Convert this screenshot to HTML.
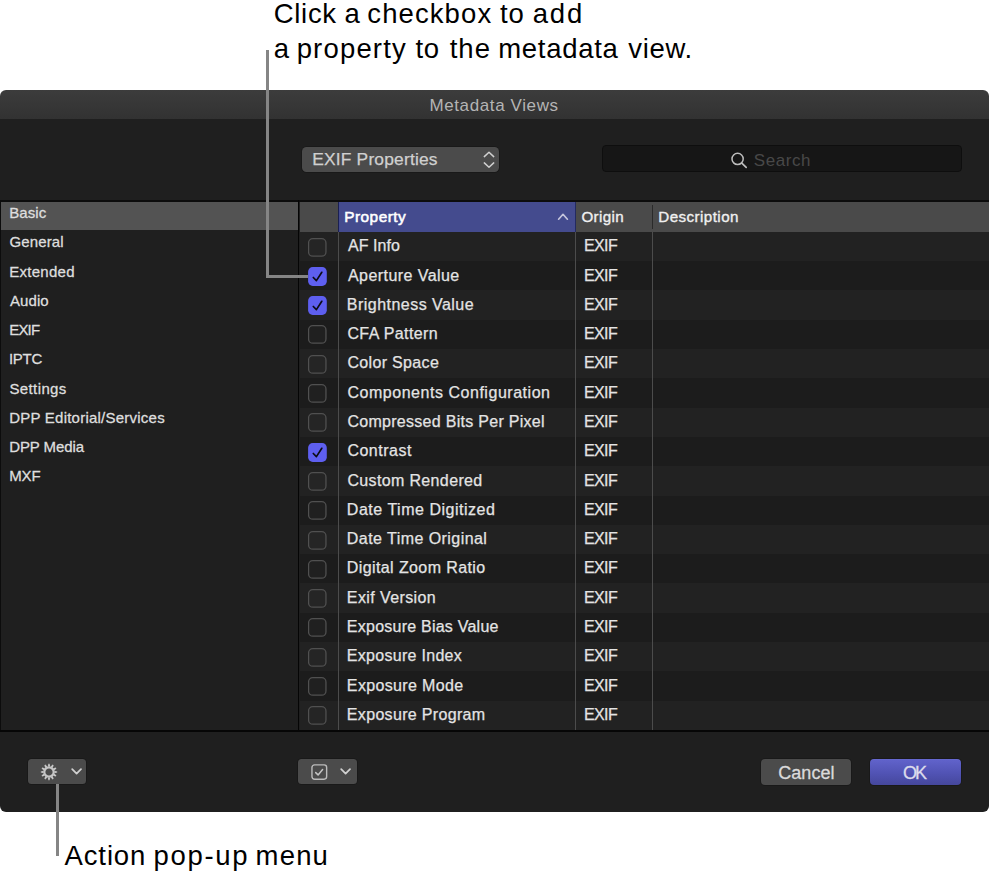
<!DOCTYPE html>
<html><head><meta charset="utf-8"><title>Metadata Views</title>
<style>
html,body{margin:0;padding:0;background:#fff;}
body{width:990px;height:884px;position:relative;overflow:hidden;font-family:"Liberation Sans",sans-serif;}
.abs{position:absolute;}
.t{position:absolute;white-space:nowrap;line-height:1em;}
.win{position:absolute;left:0;top:90px;width:988.7px;height:722px;background:linear-gradient(#3c3c3c 0,#323232 28.9px,#1f1f1f 28.9px);border-radius:6px;overflow:hidden;}
.btn{position:absolute;height:25.2px;box-shadow:0 0 0 0.8px #181818;border-radius:3.5px;background:#4b4b4b;}
.ln{position:absolute;background:#858585;}
</style></head><body>
<div class="win">
<div class="btn" style="left:302px;top:56.5px;width:197.3px;height:25.4px;border-radius:4.5px;">
<svg class="abs" style="left:179.5px;top:4.2px" width="14" height="18" viewBox="0 0 14 18"><path d="M2.3 5.6 L7 1.3 L11.7 5.6 M2.3 11.9 L7 16.2 L11.7 11.9" fill="none" stroke="#d0d0d0" stroke-width="1.5" stroke-linecap="round" stroke-linejoin="round"/></svg></div>
<div class="abs" style="left:602px;top:55.2px;width:360px;height:27.3px;border:1px solid #0e0e0e;border-radius:4px;background:#161616;box-sizing:border-box;"></div>
<svg class="abs" style="left:729px;top:61px" width="20" height="20" viewBox="0 0 20 20"><circle cx="8.6" cy="7.9" r="5.6" fill="none" stroke="#bdbdbd" stroke-width="1.5"/><path d="M12.8 12.1 L17.2 16.4" stroke="#bdbdbd" stroke-width="1.7" stroke-linecap="round"/></svg>
<div class="abs" style="left:0;top:110.1px;width:989px;height:1.8px;background:#0c0c0c;"></div>
<div class="abs" style="left:0;top:111.9px;width:298px;height:27.9px;background:#535353;"></div>
<div class="abs" style="left:0;top:110.1px;width:1.1px;height:531px;background:#0c0c0c;"></div>
<div class="abs" style="left:297.9px;top:110.1px;width:1.6px;height:531px;background:#050505;"></div>
<div class="abs" style="left:299.5px;top:111.9px;width:690px;height:527.9px;background:#1c1c1c;"></div>
<div class="abs" style="left:299.5px;top:111.9px;width:690px;height:30px;background:#4a4a4a;"></div>
<div class="abs" style="left:338px;top:111.9px;width:237.6px;height:30px;background:#444b8e;"></div>
<div class="abs" style="left:338px;top:111.9px;width:1.1px;height:30px;background:#1a1f52;"></div>
<div class="abs" style="left:574.5px;top:111.9px;width:1.1px;height:30px;background:#232a60;"></div>
<div class="abs" style="left:651.6px;top:114.5px;width:1.2px;height:24px;background:#2a2a2a;"></div>
<svg class="abs" style="left:557px;top:122px" width="12" height="9" viewBox="0 0 12 9"><path d="M1.6 7.2 L6 2.3 L10.4 7.2" fill="none" stroke="#c4c4dc" stroke-width="1.7" stroke-linecap="round" stroke-linejoin="round"/></svg>
<div class="abs" style="left:299.5px;top:141.90px;width:690px;height:29.29px;background:#222222;"></div><div class="abs" style="left:299.5px;top:200.48px;width:690px;height:29.29px;background:#222222;"></div><div class="abs" style="left:299.5px;top:259.06px;width:690px;height:29.29px;background:#222222;"></div><div class="abs" style="left:299.5px;top:317.64px;width:690px;height:29.29px;background:#222222;"></div><div class="abs" style="left:299.5px;top:376.22px;width:690px;height:29.29px;background:#222222;"></div><div class="abs" style="left:299.5px;top:434.80px;width:690px;height:29.29px;background:#222222;"></div><div class="abs" style="left:299.5px;top:493.38px;width:690px;height:29.29px;background:#222222;"></div><div class="abs" style="left:299.5px;top:551.96px;width:690px;height:29.29px;background:#222222;"></div><div class="abs" style="left:299.5px;top:610.54px;width:690px;height:29.29px;background:#222222;"></div>
<div class="abs" style="left:338.2px;top:141.9px;width:1px;height:498px;background:#4c4c4c;"></div>
<div class="abs" style="left:574.9px;top:141.9px;width:1px;height:498px;background:#4c4c4c;"></div>
<div class="abs" style="left:651.7px;top:141.9px;width:1px;height:498px;background:#4c4c4c;"></div>
<div class="abs" style="left:0;top:639.8px;width:989px;height:1.8px;background:#060606;"></div>
</div>
<svg class="abs" style="left:307.6px;top:237.60px" width="19" height="19" viewBox="0 0 19 19"><rect x="0.55" y="0.7" width="17.4" height="17.5" rx="4.3" fill="#252525" stroke="#505050" stroke-width="1.3"/></svg>
<svg class="abs" style="left:307.6px;top:266.89px" width="19" height="19" viewBox="0 0 19 19"><rect x="0.1" y="0.1" width="18.7" height="18.8" rx="4.6" fill="#5e5ff0"/><path d="M5.3 10.5 L8.4 13.6 L13.8 5.3" fill="none" stroke="#0c0c14" stroke-width="1.7" stroke-linecap="round" stroke-linejoin="round"/></svg>
<svg class="abs" style="left:307.6px;top:296.18px" width="19" height="19" viewBox="0 0 19 19"><rect x="0.1" y="0.1" width="18.7" height="18.8" rx="4.6" fill="#5e5ff0"/><path d="M5.3 10.5 L8.4 13.6 L13.8 5.3" fill="none" stroke="#0c0c14" stroke-width="1.7" stroke-linecap="round" stroke-linejoin="round"/></svg>
<svg class="abs" style="left:307.6px;top:325.47px" width="19" height="19" viewBox="0 0 19 19"><rect x="0.55" y="0.7" width="17.4" height="17.5" rx="4.3" fill="#202020" stroke="#505050" stroke-width="1.3"/></svg>
<svg class="abs" style="left:307.6px;top:354.76px" width="19" height="19" viewBox="0 0 19 19"><rect x="0.55" y="0.7" width="17.4" height="17.5" rx="4.3" fill="#252525" stroke="#505050" stroke-width="1.3"/></svg>
<svg class="abs" style="left:307.6px;top:384.05px" width="19" height="19" viewBox="0 0 19 19"><rect x="0.55" y="0.7" width="17.4" height="17.5" rx="4.3" fill="#202020" stroke="#505050" stroke-width="1.3"/></svg>
<svg class="abs" style="left:307.6px;top:413.34px" width="19" height="19" viewBox="0 0 19 19"><rect x="0.55" y="0.7" width="17.4" height="17.5" rx="4.3" fill="#252525" stroke="#505050" stroke-width="1.3"/></svg>
<svg class="abs" style="left:307.6px;top:442.63px" width="19" height="19" viewBox="0 0 19 19"><rect x="0.1" y="0.1" width="18.7" height="18.8" rx="4.6" fill="#5e5ff0"/><path d="M5.3 10.5 L8.4 13.6 L13.8 5.3" fill="none" stroke="#0c0c14" stroke-width="1.7" stroke-linecap="round" stroke-linejoin="round"/></svg>
<svg class="abs" style="left:307.6px;top:471.92px" width="19" height="19" viewBox="0 0 19 19"><rect x="0.55" y="0.7" width="17.4" height="17.5" rx="4.3" fill="#252525" stroke="#505050" stroke-width="1.3"/></svg>
<svg class="abs" style="left:307.6px;top:501.21px" width="19" height="19" viewBox="0 0 19 19"><rect x="0.55" y="0.7" width="17.4" height="17.5" rx="4.3" fill="#202020" stroke="#505050" stroke-width="1.3"/></svg>
<svg class="abs" style="left:307.6px;top:530.50px" width="19" height="19" viewBox="0 0 19 19"><rect x="0.55" y="0.7" width="17.4" height="17.5" rx="4.3" fill="#252525" stroke="#505050" stroke-width="1.3"/></svg>
<svg class="abs" style="left:307.6px;top:559.79px" width="19" height="19" viewBox="0 0 19 19"><rect x="0.55" y="0.7" width="17.4" height="17.5" rx="4.3" fill="#202020" stroke="#505050" stroke-width="1.3"/></svg>
<svg class="abs" style="left:307.6px;top:589.08px" width="19" height="19" viewBox="0 0 19 19"><rect x="0.55" y="0.7" width="17.4" height="17.5" rx="4.3" fill="#252525" stroke="#505050" stroke-width="1.3"/></svg>
<svg class="abs" style="left:307.6px;top:618.37px" width="19" height="19" viewBox="0 0 19 19"><rect x="0.55" y="0.7" width="17.4" height="17.5" rx="4.3" fill="#202020" stroke="#505050" stroke-width="1.3"/></svg>
<svg class="abs" style="left:307.6px;top:647.66px" width="19" height="19" viewBox="0 0 19 19"><rect x="0.55" y="0.7" width="17.4" height="17.5" rx="4.3" fill="#252525" stroke="#505050" stroke-width="1.3"/></svg>
<svg class="abs" style="left:307.6px;top:676.95px" width="19" height="19" viewBox="0 0 19 19"><rect x="0.55" y="0.7" width="17.4" height="17.5" rx="4.3" fill="#202020" stroke="#505050" stroke-width="1.3"/></svg>
<svg class="abs" style="left:307.6px;top:706.24px" width="19" height="19" viewBox="0 0 19 19"><rect x="0.55" y="0.7" width="17.4" height="17.5" rx="4.3" fill="#252525" stroke="#505050" stroke-width="1.3"/></svg>
<div class="btn" style="left:28px;top:758.7px;width:58.4px;">
<svg class="abs" style="left:11.1px;top:3.0px" width="20" height="20" viewBox="-10 -10 20 20"><circle r="4.65" fill="none" stroke="#c6c6c6" stroke-width="2.1"/><g fill="#c6c6c6"><path d="M-1.25 -5.4 L-0.6 -8.2 L0.6 -8.2 L1.25 -5.4 Z" transform="rotate(0)"/><path d="M-1.25 -5.4 L-0.6 -8.2 L0.6 -8.2 L1.25 -5.4 Z" transform="rotate(30)"/><path d="M-1.25 -5.4 L-0.6 -8.2 L0.6 -8.2 L1.25 -5.4 Z" transform="rotate(60)"/><path d="M-1.25 -5.4 L-0.6 -8.2 L0.6 -8.2 L1.25 -5.4 Z" transform="rotate(90)"/><path d="M-1.25 -5.4 L-0.6 -8.2 L0.6 -8.2 L1.25 -5.4 Z" transform="rotate(120)"/><path d="M-1.25 -5.4 L-0.6 -8.2 L0.6 -8.2 L1.25 -5.4 Z" transform="rotate(150)"/><path d="M-1.25 -5.4 L-0.6 -8.2 L0.6 -8.2 L1.25 -5.4 Z" transform="rotate(180)"/><path d="M-1.25 -5.4 L-0.6 -8.2 L0.6 -8.2 L1.25 -5.4 Z" transform="rotate(210)"/><path d="M-1.25 -5.4 L-0.6 -8.2 L0.6 -8.2 L1.25 -5.4 Z" transform="rotate(240)"/><path d="M-1.25 -5.4 L-0.6 -8.2 L0.6 -8.2 L1.25 -5.4 Z" transform="rotate(270)"/><path d="M-1.25 -5.4 L-0.6 -8.2 L0.6 -8.2 L1.25 -5.4 Z" transform="rotate(300)"/><path d="M-1.25 -5.4 L-0.6 -8.2 L0.6 -8.2 L1.25 -5.4 Z" transform="rotate(330)"/></g></svg>
<svg class="abs" style="left:42.6px;top:9.2px" width="12" height="8" viewBox="0 0 12 8"><path d="M1.2 1.2 L5.6 5.7 L10 1.2" fill="none" stroke="#d0d0d0" stroke-width="1.7" stroke-linecap="round" stroke-linejoin="round"/></svg></div>
<div class="btn" style="left:297.8px;top:758.7px;width:59px;">
<svg class="abs" style="left:13px;top:5px" width="17" height="17" viewBox="0 0 17 17"><rect x="0.95" y="0.9" width="14.7" height="14.3" rx="2.6" fill="none" stroke="#bcbcbc" stroke-width="1.4"/><path d="M4.7 8.6 L7.1 10.9 L11.6 5.6" fill="none" stroke="#c4c4c4" stroke-width="1.5" stroke-linecap="round" stroke-linejoin="round"/></svg>
<svg class="abs" style="left:42.6px;top:9.2px" width="12" height="8" viewBox="0 0 12 8"><path d="M1.2 1.2 L5.6 5.7 L10 1.2" fill="none" stroke="#d0d0d0" stroke-width="1.7" stroke-linecap="round" stroke-linejoin="round"/></svg></div>
<div class="btn" style="left:761.2px;top:758.9px;width:90.1px;height:25.8px;border-radius:4px;"></div>
<div class="btn" style="left:869.9px;top:758.9px;width:91.1px;height:25.9px;border-radius:4px;background:linear-gradient(#696bd2 0,#6062ca 5%,#5153b4 55%,#45479c 100%);"></div>
<div class="ln" style="left:266.45px;top:50px;width:2.7px;height:227.6px;"></div>
<div class="ln" style="left:266.45px;top:274.9px;width:41.2px;height:2.7px;"></div>
<div class="ln" style="left:55.95px;top:783.9px;width:2.7px;height:72.1px;"></div>
<div class="t" id="c0" style="left:273.76px;top:0.02px;font-size:27.5px;color:#000;letter-spacing:0.691px;">Click</div>
<div class="t" id="c1" style="left:344.50px;top:0.02px;font-size:27.5px;color:#000;">a</div>
<div class="t" id="c2" style="left:367.29px;top:0.02px;font-size:27.5px;color:#000;letter-spacing:1.099px;">checkbox</div>
<div class="t" id="c3" style="left:500.07px;top:0.02px;font-size:27.5px;color:#000;letter-spacing:0.717px;">to</div>
<div class="t" id="c4" style="left:532.78px;top:0.02px;font-size:27.5px;color:#000;letter-spacing:1.766px;">add</div>
<div class="t" id="c5" style="left:273.87px;top:34.72px;font-size:27.5px;color:#000;">a</div>
<div class="t" id="c6" style="left:296.66px;top:34.72px;font-size:27.5px;color:#000;letter-spacing:1.174px;">property</div>
<div class="t" id="c7" style="left:415.40px;top:34.72px;font-size:27.5px;color:#000;letter-spacing:0.615px;">to</div>
<div class="t" id="c8" style="left:449.65px;top:34.72px;font-size:27.5px;color:#000;letter-spacing:1.034px;">the</div>
<div class="t" id="c9" style="left:498.19px;top:34.72px;font-size:27.5px;color:#000;letter-spacing:0.710px;">metadata</div>
<div class="t" id="c10" style="left:628.17px;top:34.72px;font-size:27.5px;color:#000;letter-spacing:0.740px;">view.</div>
<div class="t" id="c11" style="left:64.50px;top:841.52px;font-size:27.5px;color:#000;letter-spacing:0.881px;">Action</div>
<div class="t" id="c12" style="left:153.41px;top:841.52px;font-size:27.5px;color:#000;letter-spacing:1.723px;">pop-up</div>
<div class="t" id="c13" style="left:255.57px;top:841.52px;font-size:27.5px;color:#000;letter-spacing:1.185px;">menu</div>
<div class="t" id="title" style="left:429.44px;top:96.91px;font-size:17px;color:#b4b4b4;letter-spacing:0.615px;">Metadata Views</div>
<div class="t" id="dd" style="left:312.18px;top:151.07px;font-size:17.4px;color:#d0d0d0;letter-spacing:0.187px;-webkit-text-stroke:0.25px #d0d0d0;">EXIF Properties</div>
<div class="t" id="search" style="left:753.77px;top:152.21px;font-size:17px;color:#484848;letter-spacing:0.560px;">Search</div>
<div class="t" id="s0" style="left:9.19px;top:205.20px;font-size:15px;color:#dedede;letter-spacing:0.109px;-webkit-text-stroke:0.3px #dedede;">Basic</div>
<div class="t" id="s1" style="left:9.58px;top:234.44px;font-size:15px;color:#dedede;letter-spacing:0.118px;-webkit-text-stroke:0.3px #dedede;">General</div>
<div class="t" id="s2" style="left:9.19px;top:263.68px;font-size:15px;color:#dedede;letter-spacing:0.279px;-webkit-text-stroke:0.3px #dedede;">Extended</div>
<div class="t" id="s3" style="left:10.07px;top:292.92px;font-size:15px;color:#dedede;letter-spacing:0.053px;-webkit-text-stroke:0.3px #dedede;">Audio</div>
<div class="t" id="s4" style="left:9.19px;top:322.16px;font-size:15px;color:#dedede;letter-spacing:-0.787px;-webkit-text-stroke:0.3px #dedede;">EXIF</div>
<div class="t" id="s5" style="left:8.89px;top:351.40px;font-size:15px;color:#dedede;letter-spacing:-0.276px;-webkit-text-stroke:0.3px #dedede;">IPTC</div>
<div class="t" id="s6" style="left:9.45px;top:380.64px;font-size:15px;color:#dedede;letter-spacing:0.388px;-webkit-text-stroke:0.3px #dedede;">Settings</div>
<div class="t" id="s7" style="left:9.19px;top:409.88px;font-size:15px;color:#dedede;letter-spacing:0.230px;-webkit-text-stroke:0.3px #dedede;">DPP Editorial/Services</div>
<div class="t" id="s8" style="left:9.19px;top:439.12px;font-size:15px;color:#dedede;letter-spacing:-0.095px;-webkit-text-stroke:0.3px #dedede;">DPP Media</div>
<div class="t" id="s9" style="left:9.19px;top:468.36px;font-size:15px;color:#dedede;letter-spacing:-0.115px;-webkit-text-stroke:0.3px #dedede;">MXF</div>
<div class="t" id="hp" style="left:344.20px;top:208.96px;font-size:15.4px;color:#ffffff;letter-spacing:0.486px;-webkit-text-stroke:0.55px #ffffff;">Property</div>
<div class="t" id="ho" style="left:581.43px;top:209.13px;font-size:15.2px;color:#f0f0f0;letter-spacing:0.362px;-webkit-text-stroke:0.35px #f0f0f0;">Origin</div>
<div class="t" id="hd" style="left:658.36px;top:209.13px;font-size:15.2px;color:#f0f0f0;letter-spacing:0.412px;-webkit-text-stroke:0.35px #f0f0f0;">Description</div>
<div class="t" id="r0" style="left:347.92px;top:238.26px;font-size:16px;color:#e4e4e4;letter-spacing:0.077px;-webkit-text-stroke:0.25px #e4e4e4;">AF Info</div>
<div class="t" id="e0" style="left:583.90px;top:238.26px;font-size:16px;color:#e4e4e4;letter-spacing:-0.591px;-webkit-text-stroke:0.25px #e4e4e4;">EXIF</div>
<div class="t" id="r1" style="left:347.93px;top:267.55px;font-size:16px;color:#e4e4e4;letter-spacing:0.446px;-webkit-text-stroke:0.25px #e4e4e4;">Aperture Value</div>
<div class="t" id="e1" style="left:583.92px;top:267.55px;font-size:16px;color:#e4e4e4;letter-spacing:-0.596px;-webkit-text-stroke:0.25px #e4e4e4;">EXIF</div>
<div class="t" id="r2" style="left:346.85px;top:296.84px;font-size:16px;color:#e4e4e4;letter-spacing:0.466px;-webkit-text-stroke:0.25px #e4e4e4;">Brightness Value</div>
<div class="t" id="e2" style="left:583.90px;top:296.84px;font-size:16px;color:#e4e4e4;letter-spacing:-0.591px;-webkit-text-stroke:0.25px #e4e4e4;">EXIF</div>
<div class="t" id="r3" style="left:347.41px;top:326.13px;font-size:16px;color:#e4e4e4;letter-spacing:0.397px;-webkit-text-stroke:0.25px #e4e4e4;">CFA Pattern</div>
<div class="t" id="e3" style="left:583.92px;top:326.13px;font-size:16px;color:#e4e4e4;letter-spacing:-0.596px;-webkit-text-stroke:0.25px #e4e4e4;">EXIF</div>
<div class="t" id="r4" style="left:347.40px;top:355.42px;font-size:16px;color:#e4e4e4;letter-spacing:0.337px;-webkit-text-stroke:0.25px #e4e4e4;">Color Space</div>
<div class="t" id="e4" style="left:583.90px;top:355.42px;font-size:16px;color:#e4e4e4;letter-spacing:-0.591px;-webkit-text-stroke:0.25px #e4e4e4;">EXIF</div>
<div class="t" id="r5" style="left:347.41px;top:384.71px;font-size:16px;color:#e4e4e4;letter-spacing:0.533px;-webkit-text-stroke:0.25px #e4e4e4;">Components Configuration</div>
<div class="t" id="e5" style="left:583.92px;top:384.71px;font-size:16px;color:#e4e4e4;letter-spacing:-0.596px;-webkit-text-stroke:0.25px #e4e4e4;">EXIF</div>
<div class="t" id="r6" style="left:347.40px;top:414.00px;font-size:16px;color:#e4e4e4;letter-spacing:0.288px;-webkit-text-stroke:0.25px #e4e4e4;">Compressed Bits Per Pixel</div>
<div class="t" id="e6" style="left:583.90px;top:414.00px;font-size:16px;color:#e4e4e4;letter-spacing:-0.591px;-webkit-text-stroke:0.25px #e4e4e4;">EXIF</div>
<div class="t" id="r7" style="left:347.41px;top:443.29px;font-size:16px;color:#e4e4e4;letter-spacing:0.501px;-webkit-text-stroke:0.25px #e4e4e4;">Contrast</div>
<div class="t" id="e7" style="left:583.92px;top:443.29px;font-size:16px;color:#e4e4e4;letter-spacing:-0.596px;-webkit-text-stroke:0.25px #e4e4e4;">EXIF</div>
<div class="t" id="r8" style="left:347.40px;top:472.58px;font-size:16px;color:#e4e4e4;letter-spacing:0.356px;-webkit-text-stroke:0.25px #e4e4e4;">Custom Rendered</div>
<div class="t" id="e8" style="left:583.90px;top:472.58px;font-size:16px;color:#e4e4e4;letter-spacing:-0.591px;-webkit-text-stroke:0.25px #e4e4e4;">EXIF</div>
<div class="t" id="r9" style="left:346.86px;top:501.87px;font-size:16px;color:#e4e4e4;letter-spacing:0.516px;-webkit-text-stroke:0.25px #e4e4e4;">Date Time Digitized</div>
<div class="t" id="e9" style="left:583.92px;top:501.87px;font-size:16px;color:#e4e4e4;letter-spacing:-0.596px;-webkit-text-stroke:0.25px #e4e4e4;">EXIF</div>
<div class="t" id="r10" style="left:346.85px;top:531.16px;font-size:16px;color:#e4e4e4;letter-spacing:0.444px;-webkit-text-stroke:0.25px #e4e4e4;">Date Time Original</div>
<div class="t" id="e10" style="left:583.90px;top:531.16px;font-size:16px;color:#e4e4e4;letter-spacing:-0.591px;-webkit-text-stroke:0.25px #e4e4e4;">EXIF</div>
<div class="t" id="r11" style="left:346.86px;top:560.45px;font-size:16px;color:#e4e4e4;letter-spacing:0.393px;-webkit-text-stroke:0.25px #e4e4e4;">Digital Zoom Ratio</div>
<div class="t" id="e11" style="left:583.92px;top:560.45px;font-size:16px;color:#e4e4e4;letter-spacing:-0.596px;-webkit-text-stroke:0.25px #e4e4e4;">EXIF</div>
<div class="t" id="r12" style="left:346.85px;top:589.74px;font-size:16px;color:#e4e4e4;letter-spacing:0.396px;-webkit-text-stroke:0.25px #e4e4e4;">Exif Version</div>
<div class="t" id="e12" style="left:583.90px;top:589.74px;font-size:16px;color:#e4e4e4;letter-spacing:-0.591px;-webkit-text-stroke:0.25px #e4e4e4;">EXIF</div>
<div class="t" id="r13" style="left:346.86px;top:619.03px;font-size:16px;color:#e4e4e4;letter-spacing:0.235px;-webkit-text-stroke:0.25px #e4e4e4;">Exposure Bias Value</div>
<div class="t" id="e13" style="left:583.92px;top:619.03px;font-size:16px;color:#e4e4e4;letter-spacing:-0.596px;-webkit-text-stroke:0.25px #e4e4e4;">EXIF</div>
<div class="t" id="r14" style="left:346.85px;top:648.32px;font-size:16px;color:#e4e4e4;letter-spacing:0.288px;-webkit-text-stroke:0.25px #e4e4e4;">Exposure Index</div>
<div class="t" id="e14" style="left:583.90px;top:648.32px;font-size:16px;color:#e4e4e4;letter-spacing:-0.591px;-webkit-text-stroke:0.25px #e4e4e4;">EXIF</div>
<div class="t" id="r15" style="left:346.86px;top:677.61px;font-size:16px;color:#e4e4e4;letter-spacing:0.347px;-webkit-text-stroke:0.25px #e4e4e4;">Exposure Mode</div>
<div class="t" id="e15" style="left:583.92px;top:677.61px;font-size:16px;color:#e4e4e4;letter-spacing:-0.596px;-webkit-text-stroke:0.25px #e4e4e4;">EXIF</div>
<div class="t" id="r16" style="left:346.85px;top:706.90px;font-size:16px;color:#e4e4e4;letter-spacing:0.327px;-webkit-text-stroke:0.25px #e4e4e4;">Exposure Program</div>
<div class="t" id="e16" style="left:583.90px;top:706.90px;font-size:16px;color:#e4e4e4;letter-spacing:-0.591px;-webkit-text-stroke:0.25px #e4e4e4;">EXIF</div>
<div class="t" id="cancel" style="left:778.29px;top:763.76px;font-size:18px;color:#dadada;letter-spacing:0.026px;-webkit-text-stroke:0.3px #dadada;">Cancel</div>
<div class="t" id="ok" style="left:903.00px;top:763.76px;font-size:18px;color:#dcdcec;letter-spacing:-2.016px;-webkit-text-stroke:0.3px #dcdcec;">OK</div>
</body></html>
